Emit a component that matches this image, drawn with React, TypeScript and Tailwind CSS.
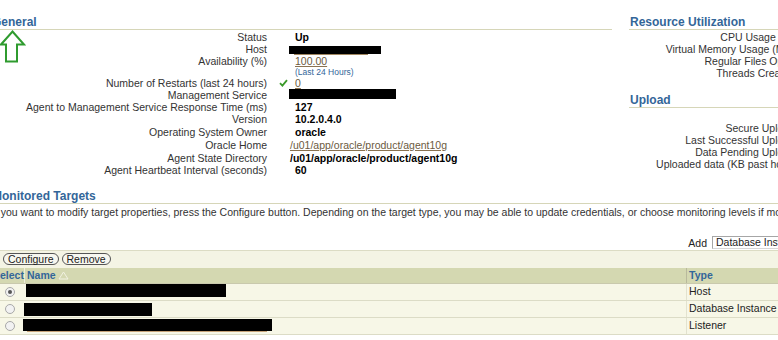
import React from "react";

const Redact = ({ w, h, cls = "" }: { w: string; h: string; cls?: string }) => (
  <span className={`block bg-black ${w} ${h} ${cls}`} />
);

type Row = { h: string; label: string; icon?: boolean; value: React.ReactNode };

const linkCls = "text-[#6b5a3e] underline underline-offset-[1px] decoration-[#8a7250]";

const generalRows: Row[] = [
  { h: "h-[12px]", label: "Status", value: <span className="pl-[6px] font-bold text-black">Up</span> },
  {
    h: "h-[12px]",
    label: "Host",
    value: (
      <span className="flex flex-col">
        <Redact w="w-[92px]" h="h-[8px]" cls="mt-[3px]" />
        <span className="ml-[5px] h-px w-[74px] bg-[#a08660]" />
      </span>
    ),
  },
  { h: "h-[12px]", label: "Availability (%)", value: <span className={`pl-[6px] ${linkCls}`}>100.00</span> },
  { h: "h-[10px]", label: "", value: <span className="pl-[6px] text-[8.5px] leading-[10px] text-[#336699]">(Last 24 Hours)</span> },
  { h: "h-[12px]", label: "Number of Restarts (last 24 hours)", icon: true, value: <span className={`pl-[6px] ${linkCls}`}>0</span> },
  { h: "h-[12px]", label: "Management Service", value: <Redact w="w-[107px]" h="h-[10px]" cls="self-start" /> },
  { h: "h-[12px]", label: "Agent to Management Service Response Time (ms)", value: <span className="pl-[6px] font-bold text-black">127</span> },
  { h: "h-[12px]", label: "Version", value: <span className="pl-[6px] font-bold text-black">10.2.0.4.0</span> },
  { h: "h-[13px]", label: "Operating System Owner", value: <span className="pl-[6px] font-bold text-black">oracle</span> },
  { h: "h-[13px]", label: "Oracle Home", value: <span className={`pl-[1px] ${linkCls}`}>/u01/app/oracle/product/agent10g</span> },
  { h: "h-[13px]", label: "Agent State Directory", value: <span className="pl-[1px] font-bold text-black">/u01/app/oracle/product/agent10g</span> },
  { h: "h-[12px]", label: "Agent Heartbeat Interval (seconds)", value: <span className="pl-[6px] font-bold text-black">60</span> },
];

const Header = ({ children, cls = "" }: { children: React.ReactNode; cls?: string }) => (
  <div className={`h-[15px] border-b border-[#d6d6b8] text-[12px] font-bold leading-[14px] text-[#336699] whitespace-nowrap ${cls}`}>
    {children}
  </div>
);

const RightRows = ({ labels }: { labels: string[] }) => (
  <div className="flex flex-col">
    {labels.map((l) => (
      <div key={l} className="flex h-[12px] items-center">
        <span className="w-[166px] shrink-0 text-right leading-[12px] whitespace-nowrap">{l}</span>
      </div>
    ))}
  </div>
);

const Radio = ({ on }: { on?: boolean }) => (
  <span className="flex h-[10px] w-[10px] items-center justify-center rounded-full border border-[#a8a8a8] bg-[#f2f2f2]">
    {on && <span className="h-[4px] w-[4px] rounded-full bg-[#555]" />}
  </span>
);

export default function App() {
  return (
    <div className="relative h-[340px] w-[778px] overflow-hidden bg-white font-['Liberation_Sans',Arial,sans-serif] text-[10.5px] text-[#333]">
      <svg className="absolute left-0 top-[30px]" width="28" height="34" viewBox="0 0 28 34">
        <polygon points="12.5,1.5 24,14.5 17,14.5 17,31.5 6,31.5 6,14.5 1,14.5" fill="none" stroke="#2f9b2f" strokeWidth="2" strokeLinejoin="miter" />
      </svg>
      <div className="-ml-[8px] w-[900px]">
        <div className="flex pt-[15px]">
          <section className="w-[620px] shrink-0">
            <Header>General</Header>
            <div className="mt-[1px] flex flex-col">
              {generalRows.map((r, i) => (
                <div key={i} className={`flex items-center ${r.h}`}>
                  <span className="w-[275px] shrink-0 text-right leading-[12px] whitespace-nowrap">{r.label}</span>
                  <span className="flex w-[22px] shrink-0 pl-[12px]">
                    {r.icon && (
                      <svg width="9" height="8" viewBox="0 0 9 8">
                        <path d="M1 4.2 L3.4 6.6 L8 1.2" fill="none" stroke="#3a9a2a" strokeWidth="1.8" />
                      </svg>
                    )}
                  </span>
                  <span className="flex h-full items-center leading-[12px] whitespace-nowrap">{r.value}</span>
                </div>
              ))}
            </div>
          </section>
          <section className="ml-[17px] w-[260px] shrink-0">
            <Header cls="pl-[1px]">Resource Utilization</Header>
            <div className="mt-[1px]">
              <RightRows labels={["CPU Usage (%)", "Virtual Memory Usage (MB)", "Regular Files Open", "Threads Created"]} />
            </div>
            <Header cls="mt-[14px] pl-[1px]">Upload</Header>
            <div className="mt-[14px]">
              <RightRows labels={["Secure Upload", "Last Successful Upload", "Data Pending Upload", "Uploaded data (KB past hour)"]} />
            </div>
          </section>
        </div>

        <section className="mt-[13px]">
          <Header>Monitored Targets</Header>
          <div className="mt-[2px] h-[12px] leading-[12px] whitespace-nowrap">
            If you want to modify target properties, press the Configure button. Depending on the target type, you may be able to update credentials, or choose monitoring levels if monitoring templates are available.
          </div>
          <div className="mt-[18px] flex h-[14px] items-start justify-end">
            <span className="mt-[1px] leading-[12px] text-[#222]">Add</span>
            <span className="ml-[5px] flex h-[13px] w-[180px] items-center border border-[#a6a6a6] border-b-[#d6d6d6] bg-white pl-[3px] leading-[11px] text-[#222]">
              Database Instance
            </span>
          </div>
          <div className="flex h-[18px] items-start gap-[3px] border-t border-[#dcdcc4] bg-[#f4f4e4] pl-[11px] pt-[2px]">
            <button className="flex h-[12px] items-center rounded-[6px] border border-[#555] bg-[#f7f7ef] px-[4px] text-[10.5px] leading-[10px] text-[#222]">
              Configure
            </button>
            <button className="flex h-[12px] items-center rounded-[6px] border border-[#555] bg-[#f7f7ef] px-[4px] text-[10.5px] leading-[10px] text-[#222]">
              Remove
            </button>
          </div>
          <div className="flex h-[16px] border-b border-[#c9c9ad] bg-[#d4d8b1] font-bold leading-[15px] text-[#336699]">
            <span className="w-[33px] shrink-0 border-r border-[#eeeedd] pl-[1px]">Select</span>
            <span className="flex w-[661px] shrink-0 items-center gap-[2px] pl-[2px]">
              Name
              <svg width="11" height="9" viewBox="0 0 11 9">
                <polygon points="5.5,1 10,8 1,8" fill="none" stroke="#f2f2e2" strokeWidth="1" />
              </svg>
            </span>
            <span className="flex-1 border-l border-[#b9b99c] pl-[2px]">Type</span>
          </div>
          {[
            { on: true, box: <Redact w="w-[200px]" h="h-[13px]" cls="ml-[1px]" />, type: "Host" },
            { on: false, box: <Redact w="w-[128px]" h="h-[13px]" cls="-ml-[1px] mt-[2px]" />, type: "Database Instance" },
            {
              on: false,
              box: (
                <span className="flex flex-col">
                  <Redact w="w-[249px]" h="h-[12px]" cls="-ml-[2px] mt-[1px]" />
                  <span className="ml-[2px] h-px w-[240px] bg-[#c8a47a]" />
                </span>
              ),
              type: "Listener",
            },
          ].map((r, i) => (
            <div key={i} className="flex h-[17px] border-b border-[#dcdcc6] bg-[#f7f7e7]">
              <span className="flex w-[33px] shrink-0 items-center justify-center pl-[3px]">
                <Radio on={r.on} />
              </span>
              <span className="flex w-[661px] shrink-0 items-start">{r.box}</span>
              <span className="flex flex-1 items-center border-l border-[#e2e2cf] pl-[2px] text-[#222]">{r.type}</span>
            </div>
          ))}
        </section>
      </div>
    </div>
  );
}
